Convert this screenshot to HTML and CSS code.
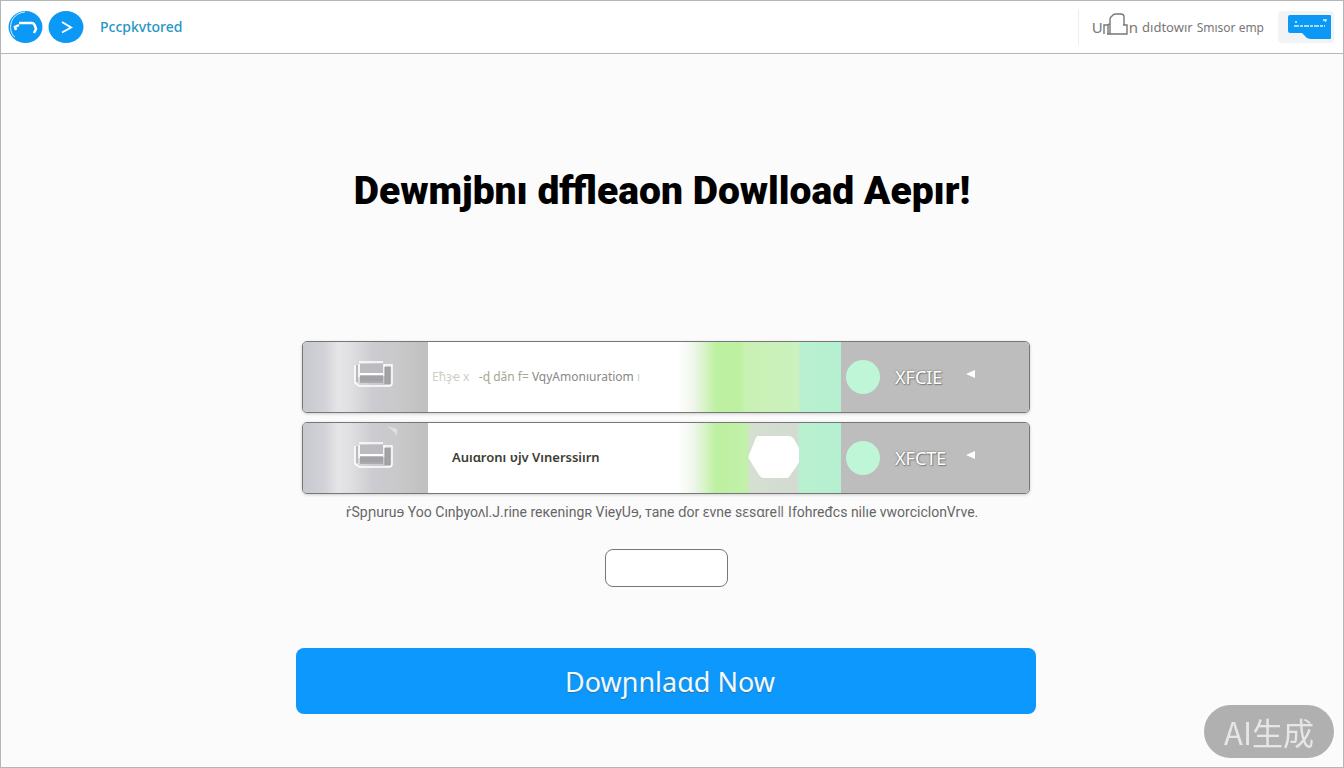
FILE: index.html
```html
<!DOCTYPE html>
<html lang="en">
<head>
    <meta charset="UTF-8">
    <meta name="viewport" content="width=device-width, initial-scale=1.0">
    <title>Dowlload</title>
    <link rel="stylesheet" href="styles.css">
</head>
<body>
<div class="page">
    <header class="topbar">
        <button type="button" class="round-btn" aria-label="Back">
            <svg width="36" height="34" viewBox="0 0 36 34">
                <ellipse cx="17.500" cy="17" rx="17" ry="16" fill="#0c98f5"/>
                <path d="M17 2C6 3 1 12 3 21c1 3 2 5 4 6" fill="none" stroke="#d8f0ff" stroke-width="1"/>
                <path d="M8 20l-1-3 4-2M11 13h13q2 0 3 3l1 3-2 4" fill="none" stroke="#fff" stroke-width="2.500"/>
            </svg>
        </button>
        <button type="button" class="round-btn" aria-label="Forward">
            <svg width="36" height="34" viewBox="0 0 36 34">
                <ellipse cx="18" cy="17" rx="17.500" ry="16" fill="#0c98f5"/>
                <path d="M14 12l9 5.500-9 5" fill="none" stroke="#fff" stroke-width="2"/>
            </svg>
        </button>
        <a class="brand" href="#">Pccpkvtored</a>
        <div class="account">
            <a class="account-link" href="#">
                <span class="account-initial">U</span>
                <svg width="26" height="24" viewBox="0 0 26 24" fill="none" stroke="#777" stroke-width="1.400">
                    <path d="M7 12V6q0-1 1-2l2-2q1-1 3-1h5q3 0 3 3v8M5 21V12q0-1 2-1M1 21V12h4M4 21h20V12h-4M7 12v9"/>
                </svg>
                <span class="account-initial">n</span>
                <span class="account-name">dıdtowır</span>
                <span class="account-plan">Smısor emp</span>
            </a>
            <button type="button" class="chat-btn" aria-label="Chat">
                <svg width="44" height="25" viewBox="0 0 44 25">
                    <path d="M2 0h40q1 0 1 1v22q0 1-1 1H23q-4 0-6-3l-3-3H2q-2 0-2-2V2q0-2 2-2z" fill="#0c98f5"/>
                    <path d="M6 11h31M7 7h2M35 5h3l-1 2" fill="none" stroke="#d9f1ff" stroke-width="1.500" stroke-dasharray="5 1 3 1"/>
                </svg>
            </button>
        </div>
    </header>

    <main class="content">
        <h1 class="title">Dewmjbnı dffleaon Dowlload Aepır!</h1>

        <div class="versions">
            <div class="version">
                <div class="version-media">
                    <svg width="40" height="28" viewBox="0 0 40 28" fill="none">
                        <path d="M6 3h23v19H6z" fill="#bcbcc0"/>
                        <path d="M6 15h23v5H6z" fill="#a3a3a7"/>
                        <path d="M6 12h23v2H6z" fill="#fff"/>
                        <path d="M31 6h5v17h-5z" fill="#a3a3a7"/>
                        <path d="M5 1h24M1 4v17q0 2 2 2l2 2h30q3 0 3-3V4h-8M5 3v13M30 3v12" stroke="#fff" stroke-width="1.500"/>
                        <path d="M6 21h23M3 4v17M36 6v17M31 6v17" stroke="#9a9a9e"/>
                    </svg>
                </div>
                <div class="version-name faded"><span class="lead">Eħҙҽ x&nbsp;&nbsp;&nbsp;</span><span class="mid">-ɖ dăn f=</span> VqyAmonıuratiom<span class="lead"> ı</span></div>
                <div class="version-meter"></div>
                <button type="button" class="version-pick">
                    <span class="dot"></span>
                    <span class="pick-text">XFCIE</span>
                    <svg class="arrow" width="10" height="8" viewBox="0 0 10 8"><path d="M0 4L9 0v8z" fill="#fff"/></svg>
                </button>
            </div>
            <div class="version">
                <div class="version-media">
                    <svg class="glint" width="10" height="10" viewBox="0 0 10 10"><path d="M0 0l10 3v7L7 6z" fill="#dededf"/></svg>
                    <svg width="40" height="28" viewBox="0 0 40 28" fill="none">
                        <path d="M6 3h23v19H6z" fill="#bcbcc0"/>
                        <path d="M6 15h23v5H6z" fill="#a3a3a7"/>
                        <path d="M6 12h23v2H6z" fill="#fff"/>
                        <path d="M31 6h5v17h-5z" fill="#a3a3a7"/>
                        <path d="M5 1h24M1 4v17q0 2 2 2l2 2h30q3 0 3-3V4h-8M5 3v13M30 3v12" stroke="#fff" stroke-width="1.500"/>
                        <path d="M6 21h23M3 4v17M36 6v17M31 6v17" stroke="#9a9a9e"/>
                    </svg>
                </div>
                <div class="version-name strong">Auıɑronı ʋjv Vınerssiırn</div>
                <div class="version-meter marked">
                    <svg width="52" height="42" viewBox="0 0 52 42"><path d="M11 0h30q3 0 5 3l5 9v14q-3 6-8 12-2 4-4 4H15q-2 0-4-3L1 23q-1-2 0-4L7 4q1-4 4-4z" fill="#fff"/></svg>
                </div>
                <button type="button" class="version-pick">
                    <span class="dot"></span>
                    <span class="pick-text">XFCTE</span>
                    <svg class="arrow" width="10" height="8" viewBox="0 0 10 8"><path d="M0 4L9 0v8z" fill="#fff"/></svg>
                </button>
            </div>
        </div>

        <p class="note">ṙSpɲuruɘ Yoo Cınþyoʌl.J.rine reкeningʀ VieyUɘ, тane ɗor ɛvne sɛsɑreǁ Ifohređcs nilıe vworciclonVrve.</p>
        <input class="code" type="text" aria-label="Code">
        <button type="button" class="download">Dowɲnlaɑd Now</button>
    </main>
</div>
<div class="mark">AI生成</div>
</body>
</html>
```
FILE: styles.css
```css
* {
    box-sizing: border-box;
}
body {
    margin: 0;
    background: #fbfbfb;
    font-family: "Noto Sans", "DejaVu Sans", sans-serif;
    color: #666;
}
button {
    font-family: inherit;
    border: none;
    padding: 0;
    cursor: pointer;
}
svg {
    display: block;
}
.page {
    min-height: 100vh;
    border: 1px solid #b5b5b5;
}
.topbar {
    display: flex;
    align-items: center;
    height: 53px;
    padding: 0 9px 0 7px;
    background: #fff;
    border-bottom: 1px solid #b5b5b5;
}
.round-btn {
    width: 36px;
    margin-right: 4px;
    background: none;
}
.brand {
    margin-left: 12px;
    padding-bottom: 2px;
    font-size: 14px;
    font-weight: 500;
    color: #2795c5;
    text-decoration: none;
}
.account {
    display: flex;
    align-items: center;
    margin-left: auto;
}
.account-link {
    display: flex;
    align-items: center;
    padding: 4px 14px 4px 13px;
    border-left: 1px solid #eee;
    color: #777;
    text-decoration: none;
}
.account-link svg {
    margin-bottom: 4px;
}
.account-initial {
    font-size: 15px;
}
.account-name {
    margin: 0 4px;
    font-size: 13px;
}
.account-plan {
    font-size: 12px;
}
.chat-btn {
    display: flex;
    align-items: center;
    justify-content: flex-end;
    width: 56px;
    height: 32px;
    padding-right: 2px;
    background: #f1f3f5;
    border-radius: 4px;
}

.content {
    display: flex;
    flex-direction: column;
    align-items: center;
    padding: 113px 12px 52px 0;
}
.title {
    margin: 0 0 126px;
    padding-right: 8px;
    font-family: Roboto, sans-serif;
    font-size: 39px;
    font-weight: 900;
    line-height: 48px;
    color: #000;
}
.versions {
    display: grid;
    gap: 9px;
    width: 100%;
    max-width: 728px;
}
.version {
    display: grid;
    grid-template-columns: 125px 1fr 164px 188px;
    height: 72px;
    overflow: hidden;
    background: #fff;
    border: 1px solid #777;
    border-radius: 5px;
    box-shadow: 0 1px 3px #ccc;
}
.version-media {
    position: relative;
    display: flex;
    align-items: center;
    padding: 0 0 4px 51px;
    background: linear-gradient(90deg, #c8c8d0, #d2d2d8 18%, #e6e6e8 28%, #dedee0 40%, #cbcbd1 56%, #c9c9cb 75%, #c0c0c0);
}
.glint {
    position: absolute;
    top: 3px;
    left: 84px;
}
.version-name {
    align-self: center;
    padding-bottom: 2px;
    white-space: pre;
    font-size: 12px;
}
.faded {
    padding-left: 4px;
    color: #888;
}
.lead {
    color: #cfcfc4;
}
.mid {
    color: #a5a590;
}
.strong {
    padding-left: 24px;
    font-size: 13px;
    font-weight: 600;
    color: #3d3d32;
}
.version-meter {
    display: flex;
    align-items: center;
    padding: 0 0 2px 71px;
    background: linear-gradient(90deg, #fff, #f0f6ed 10%, #bdf0a0 24%, #bdf0a0 38%, #c9f1b4 42%, #cbf1bd 74%, #baf0d2 75%, #b4f0d0);
}
.marked {
    background: linear-gradient(90deg, #fff, #f0f6ed 10%, #bdf0a0 24%, #c2f1aa 42%, #d5dfd1 45%, #d3dbd1 73%, #b9f0d0 75%, #b4f0d0);
}
.version-pick {
    display: flex;
    align-items: center;
    padding-left: 5px;
    background: #bdbdbd;
}
.dot {
    width: 34px;
    height: 34px;
    border-radius: 50%;
    background: #bff6d8;
}
.pick-text {
    width: 54px;
    margin-left: 15px;
    font-size: 18px;
    text-align: left;
    color: #fff;
    text-shadow: 0 0 2px #666, 1px 1px 1px #888;
}
.arrow {
    margin: 0 0 6px 17px;
}
.note {
    margin: 8px 0 27px;
    padding-right: 8px;
    font-family: Roboto, "Noto Sans", sans-serif;
    font-size: 14px;
    line-height: 20px;
}
.code {
    width: 123px;
    height: 38px;
    padding: 0 12px;
    background: #fff;
    border: 1px solid #777;
    border-radius: 8px;
}
.download {
    width: 100%;
    max-width: 740px;
    height: 66px;
    margin-top: 61px;
    padding-left: 8px;
    background: #0c98fd;
    border-radius: 8px;
    font-size: 27px;
    color: #effaff;
    text-shadow: 0 1px 1px #3a6f96;
}
.mark {
    position: fixed;
    right: 10px;
    bottom: 10px;
    padding: 0 20px;
    border-radius: 27px;
    background: #b0b0b0;
    font-family: "Noto Sans CJK SC", sans-serif;
    font-size: 31px;
    line-height: 53px;
    color: #e6e6e6;
}
```
